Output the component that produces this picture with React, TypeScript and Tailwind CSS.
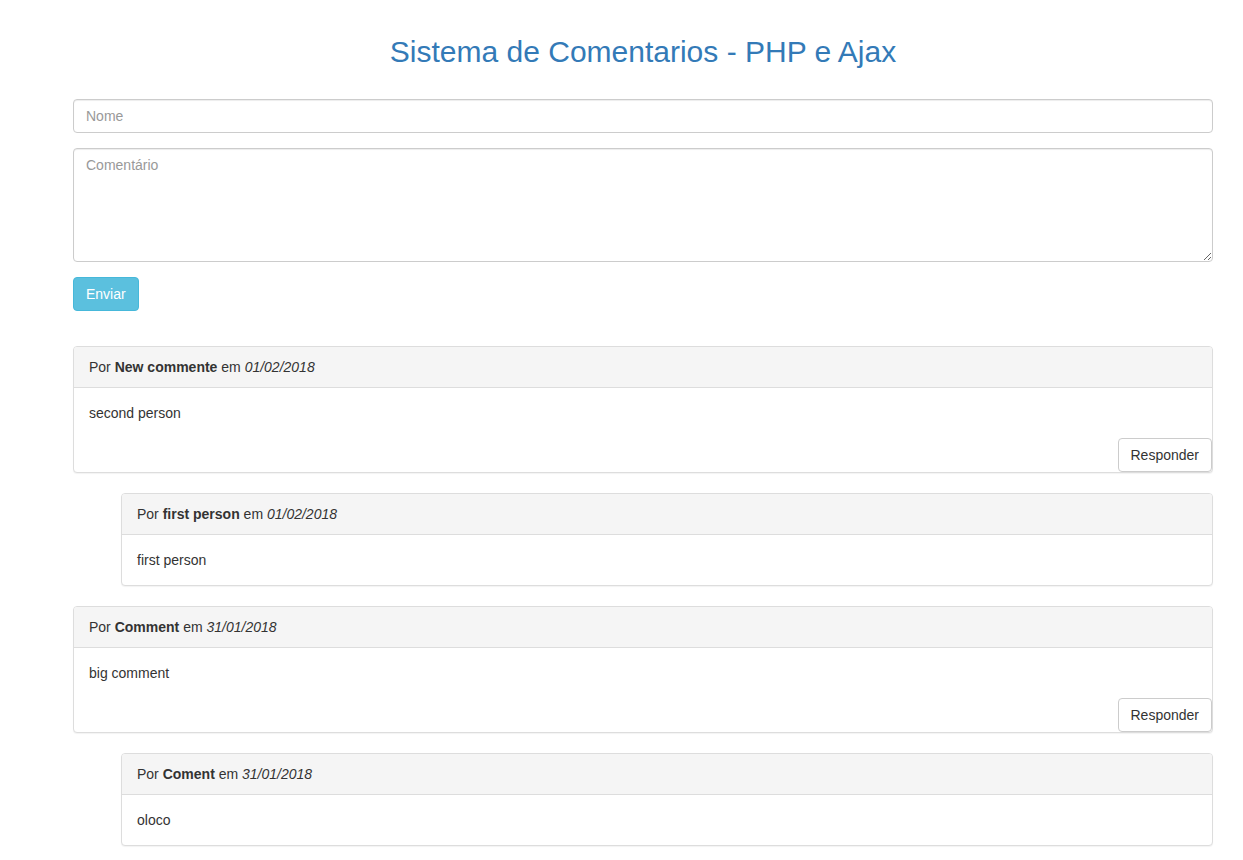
interface Comment {
    id: number,
    author: string,
    date: string,
    text: string,
    replies: Comment[]
}

const comments: Comment[] = [
    {
        id: 2, author: 'New commente', date: '01/02/2018', text: 'second person',
        replies: [{ id: 1, author: 'first person', date: '01/02/2018', text: 'first person', replies: [] }]
    },
    {
        id: 4, author: 'Comment', date: '31/01/2018', text: 'big comment',
        replies: [{ id: 3, author: 'Coment', date: '31/01/2018', text: 'oloco', replies: [] }]
    },
];

function CommentPanel({ comment, reply }: { comment: Comment, reply?: boolean }) {
    return (
        <div className={`mb-5 bg-white border border-[#dddddd] rounded-[4px] shadow-[0_1px_1px_rgba(0,0,0,0.05)] ${reply ? 'ml-12' : ''}`}>
            <div className="px-[15px] py-[10px] bg-[#f5f5f5] border-b border-[#dddddd] rounded-t-[3px] leading-5">
                Por <b>{comment.author}</b> em <i>{comment.date}</i>
            </div>
            <div className="p-[15px] leading-5">{comment.text}</div>
            {!reply &&
                <div className="flex justify-end">
                    <button className="px-3 py-[6px] leading-5 bg-white border border-[#cccccc] rounded-[4px] text-[#333333]">Responder</button>
                </div>}
        </div>
    )
}

export default function App() {
    return (
        <div className="min-h-screen bg-white text-[14px] text-[#333333] font-['Liberation_Sans',Arial,sans-serif]">
            <div className="w-[1140px] ml-[73px] pb-4">
                <h2 className="mt-[35px] mb-[31px] text-center text-[30px] leading-[1.1] text-[#337ab7]">Sistema de Comentarios - PHP e Ajax</h2>
                <form className="flex flex-col gap-[15px]" onSubmit={(e) => e.preventDefault()}>
                    <input type="text" placeholder="Nome" className="h-[34px] px-3 py-[6px] border border-[#cccccc] rounded-[4px] outline-none placeholder:text-[#999999] shadow-[inset_0_1px_1px_rgba(0,0,0,0.075)]" />
                    <textarea rows={5} placeholder="Comentário" className="h-[114px] px-3 py-[6px] leading-5 border border-[#cccccc] rounded-[4px] outline-none placeholder:text-[#999999] shadow-[inset_0_1px_1px_rgba(0,0,0,0.075)]" />
                    <div>
                        <button type="submit" className="h-[34px] px-3 leading-5 bg-[#5bc0de] border border-[#46b8da] rounded-[4px] text-white">Enviar</button>
                    </div>
                </form>
                <div className="mt-[35px]">
                    {comments.map((c) => (
                        <div key={c.id}>
                            <CommentPanel comment={c} />
                            {c.replies.map((r) => <CommentPanel key={r.id} comment={r} reply />)}
                        </div>
                    ))}
                </div>
            </div>
        </div>
    )
}
